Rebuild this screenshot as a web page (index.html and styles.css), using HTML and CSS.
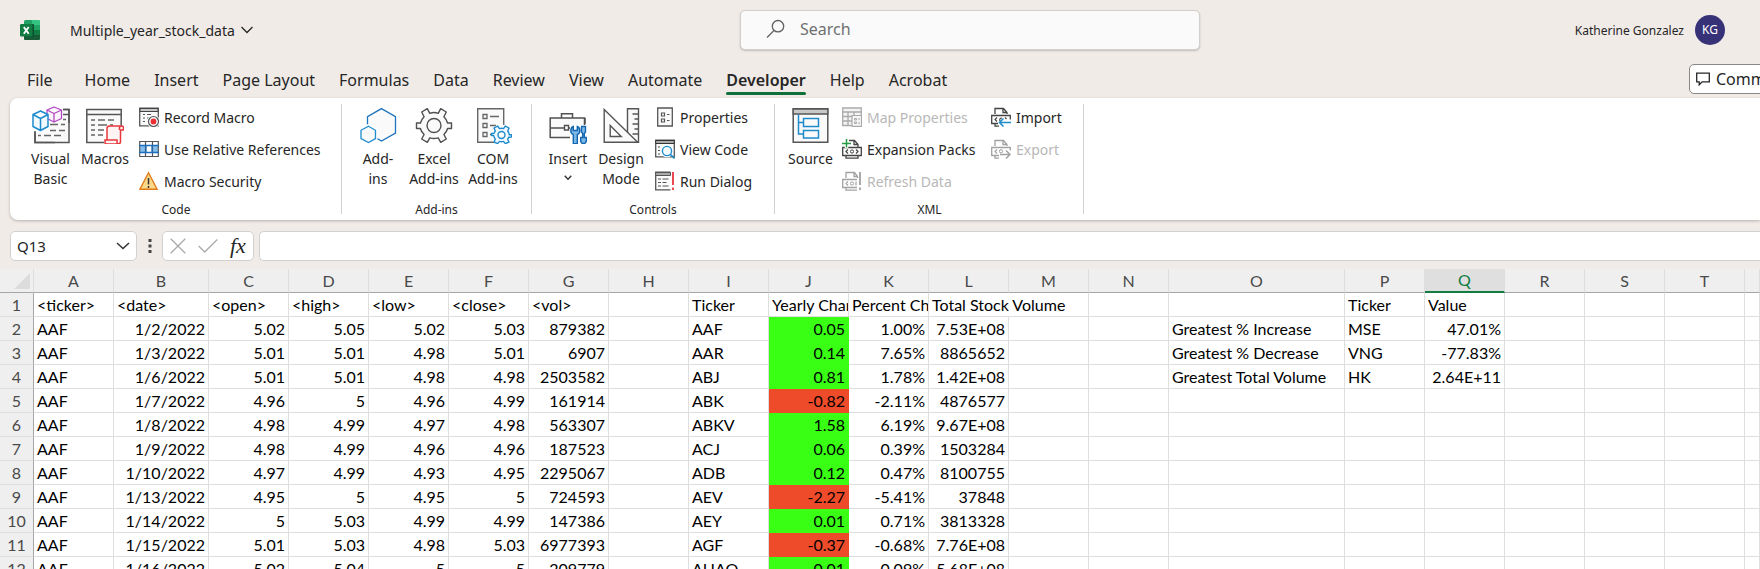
FILE: index.html
```html
<!DOCTYPE html>
<html lang="en">
<head>
<meta charset="utf-8">
<title>Multiple_year_stock_data</title>
<link rel="stylesheet" href="styles.css">
</head>
<body>
<header class="titlebar">
  <div class="doc">
    <svg class="logo" width="20" height="20" viewBox="0 0 20 20" aria-hidden="true">
      <rect x="4" width="16" height="20" rx="1.5" fill="#21a366"/>
      <path d="M12 0h6.500a1.500 1.500 0 0 1 1.500 1.500V5h-8z" fill="#33c481"/>
      <path d="M4 5h8v5H4z" fill="#107c41"/>
      <path d="M4 10h16v8.500a1.500 1.500 0 0 1-1.500 1.500h-13A1.500 1.500 0 0 1 4 18.500z" fill="#185c37"/>
      <path d="M12 10h8v5h-8z" fill="#107c41"/>
      <rect x="4" y="4" width="10" height="13" rx="1" fill="#0b5030"/>
      <rect y="4" width="12.500" height="12.500" rx="1.200" fill="#107c41"/>
      <path d="M3.800 7l4.900 6.800M8.700 7l-4.900 6.800" stroke="#fff" stroke-width="1.900"/>
    </svg>
    <button class="doc-name" type="button">Multiple_year_stock_data
      <svg width="12" height="8" viewBox="0 0 12 8" aria-hidden="true"><path d="M.5 1l5.500 5.500L11.500 1" fill="none" stroke="#262626" stroke-width="1.300"/></svg>
    </button>
  </div>
  <label class="search">
    <svg width="20" height="20" viewBox="0 0 20 20" aria-hidden="true"><g fill="none" stroke="#616161" stroke-width="1.300"><circle cx="12" cy="7.200" r="5.700"/><path d="M8 11.500L1 18.500"/></g></svg>
    <input type="text" placeholder="Search" aria-label="Search">
  </label>
  <div class="user"><span>Katherine Gonzalez</span><span class="avatar">KG</span></div>
</header>

<nav class="tabs">
  <button class="tab file" type="button">File</button>
  <button class="tab" type="button">Home</button>
  <button class="tab" type="button">Insert</button>
  <button class="tab" type="button">Page Layout</button>
  <button class="tab" type="button">Formulas</button>
  <button class="tab" type="button">Data</button>
  <button class="tab" type="button">Review</button>
  <button class="tab" type="button">View</button>
  <button class="tab" type="button">Automate</button>
  <button class="tab active" type="button">Developer</button>
  <button class="tab" type="button">Help</button>
  <button class="tab" type="button">Acrobat</button>
  <div class="comments-slot">
    <button class="comments" type="button">
      <svg width="14" height="14" viewBox="0 0 14 14" aria-hidden="true"><path d="M.7 1.200h12.600v8.600H6.200l-3 3v-3H.7z" fill="none" stroke="#262626" stroke-width="1.300"/></svg>
      Comments
    </button>
  </div>
</nav>

<section class="ribbon">
  <div class="group code">
    <div class="group-body">
      <button class="big vb" type="button">
        <svg width="38" height="38" viewBox="0 0 38 38" aria-hidden="true">
          <path d="M3 3.500h34v33H3z" fill="#fafafa" stroke="#555" stroke-width="1.500"/>
          <path d="M3 8.500h34" stroke="#555" stroke-width="1.300"/>
          <path d="M20 13.500h5m3 0h6M18 18.500h8m3 0h4M8 24.500h4m4 0h8m3 0h6M6 29.500h3m3 0h7m3 0h7" stroke="#666" stroke-width="1.500"/>
          <path d="M0 0h31v17H18v9H0z" fill="#fff"/>
          <path d="M18 3.500h-1M3 25v11.500h20M31 3.500h6V17" fill="none" stroke="#555" stroke-width="1.500"/>
          <path d="M22 1l7.500 3v8.500L22 16l-7-3.500V4zM15 4l7 3.500L29.500 4M22 7.500V16" fill="#fbf3fc" stroke="#b146c2" stroke-width="1.300" stroke-linejoin="round"/>
          <path d="M8.500 5L16 8.500v12L8.500 24.500 1 20.500v-12zM1 8.500l7.500 4 7.500-4M8.500 12.500v12" fill="#f3faff" stroke="#1e8bcd" stroke-width="1.500" stroke-linejoin="round"/>
        </svg>
        <span>Visual<br>Basic</span>
      </button>
      <button class="big macros" type="button">
        <svg width="38" height="38" viewBox="0 0 38 38" aria-hidden="true">
          <path d="M.8 3.500h34.400v33H.8z" fill="#fafafa" stroke="#555" stroke-width="1.500"/>
          <path d="M.8 8.500h34.400" stroke="#555" stroke-width="1.300"/>
          <path d="M5 14h4m3 0h7m3 0h6M5 19h4m3 0h9m3 0h3M5 24h4m3 0h6M5 29h4m3 0h5" stroke="#666" stroke-width="1.500"/>
          <path d="M18 37V20h13l6 3v15z" fill="#fff"/>
          <path d="M34.500 20H23.500a2.500 2.500 0 0 0-2.500 2.500V34h-2v2a2 2 0 0 0 2 2h11a2.500 2.500 0 0 0 2.500-2.500V24h3v-2a2 2 0 0 0-4 0v2M21 34h10v2a2 2 0 0 0 2 2" fill="#fff4f4" stroke="#e8383d" stroke-width="1.500"/>
        </svg>
        <span>Macros</span>
      </button>
      <div class="stack">
        <button class="small" type="button">
          <svg width="20" height="20" viewBox="0 0 20 20" aria-hidden="true"><path d="M.7 1.200h18.600v17.600H.7z" fill="#fafafa" stroke="#555" stroke-width="1.300"/><path d="M1 1.500h18v3H1z" fill="#c8c8c8" stroke="#444" stroke-width="1"/><path d="M4 7.500h2m2 0h4M4 11h2m2 0h2M4 14.500h2m2 0h1" stroke="#555" stroke-width="1.200"/><circle cx="14.500" cy="14.500" r="6.500" fill="#fff"/><circle cx="14.500" cy="14.500" r="5" fill="#fff" stroke="#555" stroke-width="1.200"/><circle cx="14.500" cy="14.500" r="2.900" fill="#eb2f33"/></svg>
          Record Macro
        </button>
        <button class="small" type="button">
          <svg width="20" height="20" viewBox="0 0 20 20" aria-hidden="true"><path d="M.7 2h18.600v16H.7z" fill="#fff"/><path d="M.7 6.500h6v7h-6zM13.300 6.500h6v7h-6z" fill="#83beec"/><path d="M.7 2.500h18.600v15H.7zM6.500 2.500v15M13.500 2.500v15" fill="none" stroke="#555" stroke-width="1.200"/><path d="M0 6.500h7v7H0M20 6.500h-7v7h7M7 6.500h6M7 13.500h6" fill="none" stroke="#1f6fc0" stroke-width="1.300"/></svg>
          Use Relative References
        </button>
        <button class="small" type="button">
          <svg width="20" height="20" viewBox="0 0 20 20" aria-hidden="true"><path d="M9.500 1.700l8.600 16.600H.9z" fill="#fbd98b" stroke="#e07b1a" stroke-width="1.400"/><path d="M9.500 7v6.500M9.500 15v2" stroke="#333" stroke-width="1.500"/></svg>
          Macro Security
        </button>
      </div>
    </div>
    <div class="group-name">Code</div>
  </div>
  <div class="divider"></div>

  <div class="group addins">
    <div class="group-body">
      <button class="big narrow" type="button">
        <svg width="38" height="38" viewBox="0 0 38 38" aria-hidden="true"><g fill="#fafafa" stroke="#1e74bf" stroke-width="1.300"><path d="M22.500 2.600l14 8v16.500l-14 8-14-8V10.600z"/><path d="M9.500 20l7 4.200v8.200l-7 4.200-7.500-4.200v-8.200z" stroke="#fff" stroke-width="4"/><path d="M9.500 20.300l7 4v8.200l-7 4-7.500-4v-8.200z" stroke="#1e8bcd"/></g></svg>
        <span>Add-<br>ins</span>
      </button>
      <button class="big excel-add" type="button">
        <svg width="38" height="38" viewBox="0 0 38 38" aria-hidden="true"><g fill="#fafafa" stroke="#505050" stroke-width="1.400"><path d="M12.300 2.700L14.800 7.300Q19 5.800 23.200 7.300L25.700 2.700L31.300 6L28.900 10.700Q31.800 13.700 32.600 17H36.500V22.500H32.600Q31.800 25.800 28.900 28.500L31.300 33L25.700 36.300L23.200 31.800Q19 33.200 14.800 31.800L12.300 36.300L6.700 33L9.100 28.500Q6.200 25.800 5.400 22.500H1.500V17H5.400Q6.200 13.700 9.100 10.700L6.700 6Z" stroke-linejoin="round"/><circle cx="19" cy="19.500" r="7"/></g></svg>
        <span>Excel<br>Add-ins</span>
      </button>
      <button class="big com" type="button">
        <svg width="38" height="38" viewBox="0 0 38 38" aria-hidden="true"><path d="M3.700 2.700h26v33.600h-26z" fill="#fafafa" stroke="#666" stroke-width="1.400"/><path d="M9 8.500h4v4H9zM9 17.500h4v4H9zM9 26.500h4v4H9zM16 10.500h9M16 19.500h6M16 28.500h2" fill="none" stroke="#666" stroke-width="1.300"/><circle cx="27.500" cy="29" r="10.500" fill="#fff"/><path d="M23.600 20L25.500 22.600Q27.500 22 29.500 22.600L31.400 20L35 22.100L33.700 25Q35 26.500 35.300 28.800L37.500 28.800L37.500 31L34.600 31.200Q34.200 32.600 33.700 33.200L35 36L31.400 37.600L29.500 35.400Q27.500 36 25.500 35.400L23.600 37.600L20 36L21.300 33.200Q20 31.500 19.700 29.500L17.500 29.500L17.500 27.500L20 27.300Q20.500 26 21.300 25L20 22.100Z" fill="#f3faff" stroke="#1e8bcd" stroke-width="1.400" stroke-linejoin="round"/><circle cx="27.500" cy="29" r="3.500" fill="#fff" stroke="#1e8bcd" stroke-width="1.400"/></svg>
        <span>COM<br>Add-ins</span>
      </button>
    </div>
    <div class="group-name">Add-ins</div>
  </div>
  <div class="divider"></div>

  <div class="group controls">
    <div class="group-body">
      <button class="big narrow" type="button">
        <svg width="38" height="38" viewBox="0 0 38 38" aria-hidden="true"><path d="M1.200 12h34.300v19.500H1.200z" fill="#fafafa" stroke="#505050" stroke-width="1.500"/><path d="M12.500 12V7.800h11V12M1.200 22h14M20 22h5" fill="none" stroke="#505050" stroke-width="1.500"/><path d="M15.500 19.500h4v4.500h-4z" fill="#fff" stroke="#505050" stroke-width="1.400"/><path d="M21 19h17v19H21z" fill="#fff"/><path d="M36 12v6" stroke="#505050" stroke-width="1.500"/><path d="M24.300 20.500v4h4v-4q2.500 1 2.500 4.200 0 2.800-2.500 3.900v9.200h-4v-9.200q-2.500-1.100-2.500-3.900 0-3.200 2.500-4.200zM32.500 20.500h4v5.500l-1.200 1.500v4h2v4l-1.500 2h-2.600l-1.500-2v-4h2v-4l-1.200-1.500z" fill="#7db9e8" stroke="#1365ae" stroke-width="1.400"/></svg>
        <span>Insert</span>
        <svg class="drop" width="8" height="6" viewBox="0 0 8 6" aria-hidden="true"><path d="M.7.8L4 4.300 7.300.8" fill="none" stroke="#333" stroke-width="1.400"/></svg>
      </button>
      <button class="big design" type="button">
        <svg width="38" height="38" viewBox="0 0 38 38" aria-hidden="true"><g fill="#fafafa" stroke="#555" stroke-width="1.400"><path d="M25.500 2.700h11v33.600h-11z"/><path d="M30.500 8h6M32.500 13h4M30.500 18h6M32.500 23h4M30.500 28h6"/><path d="M2.200 3.500l33.500 32.800H2.200z"/><path d="M8.200 19.500v11h11z" fill="#fff"/></g></svg>
        <span>Design<br>Mode</span>
      </button>
      <div class="stack">
        <button class="small" type="button">
          <svg width="20" height="20" viewBox="0 0 20 20" aria-hidden="true"><path d="M2.700 1h14.600v18H2.700z" fill="#fafafa" stroke="#555" stroke-width="1.300"/><path d="M6.500 6h3v3h-3zM6.500 12h3v3h-3zM12 7.500h2.500M12 13.500h2.500" fill="none" stroke="#555" stroke-width="1.200"/></svg>
          Properties
        </button>
        <button class="small" type="button">
          <svg width="20" height="20" viewBox="0 0 20 20" aria-hidden="true"><path d="M.7 1.200h18.600v16.600H.7z" fill="#fafafa" stroke="#555" stroke-width="1.300"/><path d="M.7 1.500h18.600v3H.7z" fill="#aaa" stroke="#333"/><path d="M3 8h2M3 11.500h2M3 15h2" stroke="#555" stroke-width="1.200"/><circle cx="12" cy="12" r="6.300" fill="#fff"/><path d="M15 15l4.500 4.500" stroke="#1e8bcd" stroke-width="1.700"/><circle cx="12" cy="12" r="4.600" fill="#f3faff" stroke="#1e8bcd" stroke-width="1.400"/></svg>
          View Code
        </button>
        <button class="small" type="button">
          <svg width="20" height="20" viewBox="0 0 20 20" aria-hidden="true"><path d="M15.500 1.200H.7v17.600h14.800" fill="#fafafa" stroke="#555" stroke-width="1.300"/><path d="M.7 1.500h14.800v3H.7z" fill="#aaa" stroke="#555"/><path d="M3 8h3m1.500 0h6M3 11.500h3m1.500 0h4M3 15h3m1.500 0h6" stroke="#555" stroke-width="1.200"/><path d="M18 1v13M18 16.500v2.500" stroke="#e8383d" stroke-width="1.800"/></svg>
          Run Dialog
        </button>
      </div>
    </div>
    <div class="group-name">Controls</div>
  </div>
  <div class="divider"></div>

  <div class="group xml">
    <div class="group-body">
      <button class="big narrow" type="button">
        <svg width="38" height="38" viewBox="0 0 38 38" aria-hidden="true"><path d="M2.200 2.700h34.600v33.600H2.200z" fill="#fafafa" stroke="#555" stroke-width="1.500"/><path d="M2.200 3h34.600v5H2.200z" fill="#c8c8c8" stroke="#555" stroke-width="1.300"/><path d="M7.500 8.500V28h5M7.500 16.500h5M12.500 12.500h15v8h-15zM12.500 24.500h15v7.500h-15z" fill="none" stroke="#1e8bcd" stroke-width="1.500"/></svg>
        <span>Source</span>
      </button>
      <div class="stack">
        <button class="small" type="button" disabled>
          <svg width="20" height="20" viewBox="0 0 20 20" aria-hidden="true"><path d="M.7 1h18.600v17.500H.7z" fill="#f4f4f4"/><path d="M.7 1h18.600v4H.7zM.7 5v13.500h9M6 5v13.500M12 5v4M19.300 5v4M.7 9.500H10M.7 14H10" fill="none" stroke="#aaa" stroke-width="1.300"/><path d="M10 8.500h9.500v10.800H10z" fill="#f7f7f7" stroke="#aaa" stroke-width="1.200"/><path d="M12.500 11.500h2v1.500h-2zM12.500 15h2v1.500h-2zM16 12h2M16 16h2" fill="none" stroke="#aaa"/></svg>
          Map Properties
        </button>
        <button class="small" type="button">
          <svg width="20" height="20" viewBox="0 0 20 20" aria-hidden="true"><path d="M7 1.500h5.500l3.500 4v3M12 1.500v4h4M.7 8.500h18.600v8H.7zM4 16.500v2.700h12v-2.700" fill="none" stroke="#444" stroke-width="1.300"/><path d="M6 10.500l-2 2 2 2M14 10.500l2 2-2 2" fill="none" stroke="#444" stroke-width="1.200"/><circle cx="10" cy="12.500" r="1.600" fill="none" stroke="#444"/><path d="M4.500 0v9M0 4.500h9" stroke="#fff" stroke-width="3.500"/><path d="M4.500 0v8.500M0 4.500h9" stroke="#299a45" stroke-width="1.500"/></svg>
          Expansion Packs
        </button>
        <button class="small" type="button" disabled>
          <svg width="20" height="20" viewBox="0 0 20 20" aria-hidden="true"><path d="M4 7V1.500h8.500l3 4V7M12 1.500v4h3.500M15 8.500H.7v8H15M4 16.500v2.700h11" fill="none" stroke="#a2a2a2" stroke-width="1.300"/><path d="M6 10.500l-2 2 2 2M14 10.500v4" fill="none" stroke="#a2a2a2" stroke-width="1.200"/><circle cx="10" cy="12.500" r="1.600" fill="none" stroke="#a2a2a2"/><path d="M18 1v13M18 16.500v2.500" stroke="#a2a2a2" stroke-width="1.800"/></svg>
          Refresh Data
        </button>
      </div>
      <div class="stack">
        <button class="small" type="button">
          <svg width="20" height="20" viewBox="0 0 20 20" aria-hidden="true"><path d="M4 7V1.500h8.500l3.500 4V7M12 1.500v4h4M7 16.500H.7v-8h18.600v4M4 16.500v2.700h4" fill="none" stroke="#444" stroke-width="1.300"/><path d="M6 10.500l-2 2 2 2M9 14q-1-3 2-3M14 10.500l1.500 1.500" fill="none" stroke="#444" stroke-width="1.200"/><path d="M20 15.500H9M12.500 11.500l-4 4 4 4" fill="none" stroke="#1e8bcd" stroke-width="1.500"/></svg>
          Import
        </button>
        <button class="small" type="button" disabled>
          <svg width="20" height="20" viewBox="0 0 20 20" aria-hidden="true"><path d="M4 7V1.500h8.500l3.500 4V7M12 1.500v4h4M8 16.500H.7v-8h18.600v3M4 16.500v2.700h4" fill="none" stroke="#a2a2a2" stroke-width="1.300"/><path d="M6 10.500l-2 2 2 2" fill="none" stroke="#a2a2a2" stroke-width="1.200"/><circle cx="10" cy="12.300" r="1.600" fill="none" stroke="#a2a2a2"/><path d="M9 15.500h10M15 11.500l4 4-4 4" fill="none" stroke="#a2a2a2" stroke-width="1.500"/></svg>
          Export
        </button>
      </div>
    </div>
    <div class="group-name">XML</div>
  </div>
  <div class="divider"></div>
</section>

<section class="formula-bar">
  <div class="name-box">
    <input type="text" value="Q13" aria-label="Name Box">
    <svg width="14" height="8" viewBox="0 0 14 8" aria-hidden="true"><path d="M1 1l6 5.500L13 1" fill="none" stroke="#333" stroke-width="1.500"/></svg>
  </div>
  <svg class="dots" width="4" height="14" viewBox="0 0 4 14" aria-hidden="true"><path d="M.5 0h3v3h-3zM.5 5.500h3v3h-3zM.5 11h3v3h-3z" fill="#444"/></svg>
  <div class="fx-box">
    <button type="button" aria-label="Cancel"><svg width="16" height="16" viewBox="0 0 16 16"><path d="M.7.700l14.600 14.600M15.300.7L.7 15.300" stroke="#aaa" stroke-width="1.300"/></svg></button>
    <button type="button" aria-label="Enter"><svg width="20" height="16" viewBox="0 0 20 16"><path d="M.7 8l6 6L19.300 1.500" fill="none" stroke="#aaa" stroke-width="1.300"/></svg></button>
    <button class="fx" type="button" aria-label="Insert Function">fx</button>
  </div>
  <input class="formula" type="text" aria-label="Formula Bar">
</section>

<table class="sheet">
  <colgroup>
    <col class="w-head"><col class="w80"><col class="w-date"><col class="w80"><col class="w80"><col class="w80"><col class="w80"><col class="w80"><col class="w80"><col class="w80"><col class="w80"><col class="w80"><col class="w80"><col class="w80"><col class="w80"><col class="w-label"><col class="w80"><col class="w80"><col class="w80"><col class="w80"><col class="w80"><col>
  </colgroup>
  <thead>
    <tr><th class="corner"><svg width="16" height="16" viewBox="0 0 16 16" aria-hidden="true"><path d="M16 0v16H0z" fill="#dcdcdc"/></svg></th><th>A</th><th>B</th><th>C</th><th>D</th><th>E</th><th>F</th><th>G</th><th>H</th><th>I</th><th>J</th><th>K</th><th>L</th><th>M</th><th>N</th><th>O</th><th>P</th><th class="selected">Q</th><th>R</th><th>S</th><th>T</th><th></th></tr>
  </thead>
  <tbody>
    <tr class="labels"><th>1</th><td>&lt;ticker&gt;</td><td>&lt;date&gt;</td><td>&lt;open&gt;</td><td>&lt;high&gt;</td><td>&lt;low&gt;</td><td>&lt;close&gt;</td><td>&lt;vol&gt;</td><td></td><td>Ticker</td><td>Yearly Change</td><td>Percent Change</td><td colspan="2">Total Stock Volume</td><td></td><td></td><td>Ticker</td><td>Value</td><td></td><td></td><td></td><td></td></tr>
    <tr><th>2</th><td class="t">AAF</td><td>1/2/2022</td><td>5.02</td><td>5.05</td><td>5.02</td><td>5.03</td><td>879382</td><td></td><td class="t">AAF</td><td class="up">0.05</td><td>1.00%</td><td>7.53E+08</td><td></td><td></td><td class="t">Greatest % Increase</td><td class="t">MSE</td><td>47.01%</td><td></td><td></td><td></td><td></td></tr>
    <tr><th>3</th><td class="t">AAF</td><td>1/3/2022</td><td>5.01</td><td>5.01</td><td>4.98</td><td>5.01</td><td>6907</td><td></td><td class="t">AAR</td><td class="up">0.14</td><td>7.65%</td><td>8865652</td><td></td><td></td><td class="t">Greatest % Decrease</td><td class="t">VNG</td><td>-77.83%</td><td></td><td></td><td></td><td></td></tr>
    <tr><th>4</th><td class="t">AAF</td><td>1/6/2022</td><td>5.01</td><td>5.01</td><td>4.98</td><td>4.98</td><td>2503582</td><td></td><td class="t">ABJ</td><td class="up">0.81</td><td>1.78%</td><td>1.42E+08</td><td></td><td></td><td class="t">Greatest Total Volume</td><td class="t">HK</td><td>2.64E+11</td><td></td><td></td><td></td><td></td></tr>
    <tr><th>5</th><td class="t">AAF</td><td>1/7/2022</td><td>4.96</td><td>5</td><td>4.96</td><td>4.99</td><td>161914</td><td></td><td class="t">ABK</td><td class="down">-0.82</td><td>-2.11%</td><td>4876577</td><td></td><td></td><td></td><td></td><td></td><td></td><td></td><td></td><td></td></tr>
    <tr><th>6</th><td class="t">AAF</td><td>1/8/2022</td><td>4.98</td><td>4.99</td><td>4.97</td><td>4.98</td><td>563307</td><td></td><td class="t">ABKV</td><td class="up">1.58</td><td>6.19%</td><td>9.67E+08</td><td></td><td></td><td></td><td></td><td></td><td></td><td></td><td></td><td></td></tr>
    <tr><th>7</th><td class="t">AAF</td><td>1/9/2022</td><td>4.98</td><td>4.99</td><td>4.96</td><td>4.96</td><td>187523</td><td></td><td class="t">ACJ</td><td class="up">0.06</td><td>0.39%</td><td>1503284</td><td></td><td></td><td></td><td></td><td></td><td></td><td></td><td></td><td></td></tr>
    <tr><th>8</th><td class="t">AAF</td><td>1/10/2022</td><td>4.97</td><td>4.99</td><td>4.93</td><td>4.95</td><td>2295067</td><td></td><td class="t">ADB</td><td class="up">0.12</td><td>0.47%</td><td>8100755</td><td></td><td></td><td></td><td></td><td></td><td></td><td></td><td></td><td></td></tr>
    <tr><th>9</th><td class="t">AAF</td><td>1/13/2022</td><td>4.95</td><td>5</td><td>4.95</td><td>5</td><td>724593</td><td></td><td class="t">AEV</td><td class="down">-2.27</td><td>-5.41%</td><td>37848</td><td></td><td></td><td></td><td></td><td></td><td></td><td></td><td></td><td></td></tr>
    <tr><th>10</th><td class="t">AAF</td><td>1/14/2022</td><td>5</td><td>5.03</td><td>4.99</td><td>4.99</td><td>147386</td><td></td><td class="t">AEY</td><td class="up">0.01</td><td>0.71%</td><td>3813328</td><td></td><td></td><td></td><td></td><td></td><td></td><td></td><td></td><td></td></tr>
    <tr><th>11</th><td class="t">AAF</td><td>1/15/2022</td><td>5.01</td><td>5.03</td><td>4.98</td><td>5.03</td><td>6977393</td><td></td><td class="t">AGF</td><td class="down">-0.37</td><td>-0.68%</td><td>7.76E+08</td><td></td><td></td><td></td><td></td><td></td><td></td><td></td><td></td><td></td></tr>
    <tr><th>12</th><td class="t">AAF</td><td>1/16/2022</td><td>5.02</td><td>5.04</td><td>5</td><td>5</td><td>209779</td><td></td><td class="t">AHAO</td><td class="up">0.01</td><td>0.09%</td><td>5.68E+08</td><td></td><td></td><td></td><td></td><td></td><td></td><td></td><td></td><td></td></tr>
  </tbody>
</table>
</body>
</html>
```
FILE: styles.css
```css
* {
  box-sizing: border-box;
}

html {
  height: 100%;
  overflow: hidden;
}

body {
  height: 100%;
  margin: 0;
  overflow: hidden;
  background: #f0ebe7;
  color: #262626;
  font-family: "Noto Sans", "Open Sans", sans-serif;
  font-size: 14px;
}

button,
input {
  margin: 0;
  padding: 0;
  border: 0;
  background: none;
  color: inherit;
  font: inherit;
}

svg {
  display: block;
  flex: none;
}

/* Title bar */
.titlebar {
  display: grid;
  grid-template-columns: 37fr 460px 28fr;
  align-items: center;
  height: 60px;
}

.doc {
  display: flex;
  align-items: center;
  gap: 30px;
  padding-left: 20px;
}

.doc-name {
  display: flex;
  align-items: center;
  gap: 6px;
}

.search {
  display: flex;
  align-items: center;
  gap: 14px;
  height: 40px;
  padding: 0 0 2px 25px;
  border: 1px solid #d2cecb;
  border-radius: 5px;
  background: #fafafa;
  box-shadow: 0 1px 2px #00000033;
}

.search input {
  flex: 1;
  min-width: 0;
  font-size: 16px;
}

.search input::placeholder {
  color: #707070;
  opacity: 1;
}

.user {
  display: flex;
  align-items: center;
  justify-content: flex-end;
  gap: 11px;
  padding-right: 35px;
  font-size: 12px;
}

.avatar {
  width: 30px;
  height: 30px;
  border-radius: 50%;
  background: #373277;
  color: #fff;
  line-height: 30px;
  text-align: center;
}

/* Ribbon tabs */
.tabs {
  display: flex;
  height: 38px;
  padding-left: 15px;
  font-size: 16px;
}

.tab {
  position: relative;
  height: 38px;
  padding: 2px 12px 0;
  white-space: nowrap;
}

.file {
  margin-right: 8px;
}

.active {
  font-weight: 600;
}

.active::after {
  content: "";
  position: absolute;
  right: 12px;
  bottom: 3px;
  left: 12px;
  height: 3px;
  border-radius: 2px;
  background: #0f703b;
}

.comments-slot {
  flex: 1;
  display: flex;
  justify-content: flex-end;
  align-items: center;
  min-width: 0;
}

.comments {
  display: flex;
  align-items: center;
  gap: 6px;
  height: 30px;
  margin-right: -53px;
  padding: 0 14px 0 6px;
  border: 1px solid #8a8886;
  border-radius: 5px;
  background: #fff;
}

/* Ribbon */
.ribbon {
  display: flex;
  height: 122px;
  margin-left: 10px;
  border-radius: 8px 0 0 8px;
  background: #fff;
  box-shadow: 0 1px 3px #00000040;
}

.group {
  display: flex;
  flex-direction: column;
}

.code {
  width: 331px;
  padding-left: 13px;
}

.addins {
  width: 189px;
  padding-left: 12px;
}

.controls {
  width: 242px;
  padding-left: 12px;
}

.xml {
  width: 308px;
  padding-left: 13px;
}

.divider {
  width: 1px;
  margin: 6px 0;
  background: #d1d1d1;
}

.group-body {
  display: flex;
  height: 102px;
}

.group-name {
  margin-left: -12px;
  font-size: 12px;
  line-height: 20px;
  text-align: center;
}

.big {
  display: flex;
  flex-direction: column;
  align-items: center;
  padding-top: 8px;
  line-height: 20px;
  white-space: nowrap;
}

.big span {
  margin-top: 5px;
}

.vb {
  width: 55px;
}

.macros {
  width: 54px;
}

.narrow {
  width: 48px;
}

.excel-add {
  width: 64px;
}

.com {
  width: 54px;
}

.design {
  width: 58px;
}

.drop {
  margin-top: 6px;
}

.stack {
  display: flex;
  flex-direction: column;
  gap: 4px;
  padding: 5px 0 0 7px;
}

.controls .stack {
  padding-left: 5px;
}

.xml .stack {
  min-width: 149px;
  padding-left: 9px;
}

.small {
  display: flex;
  align-items: center;
  gap: 5px;
  height: 28px;
  white-space: nowrap;
}

.small:disabled {
  color: #b8b8b8;
}

/* Formula bar */
.formula-bar {
  display: flex;
  align-items: center;
  height: 49px;
  padding: 2px 0 0 10px;
}

.name-box,
.fx-box,
.formula {
  height: 30px;
  border: 1px solid #d1d1d1;
  border-radius: 5px;
  background: #fff;
}

.name-box {
  display: flex;
  align-items: center;
  width: 127px;
  padding: 0 6px;
}

.name-box input {
  flex: 1;
  min-width: 0;
  font-size: 15px;
}

.dots {
  margin: 0 10px 0 11px;
}

.fx-box {
  display: flex;
  align-items: center;
  gap: 12px;
  width: 92px;
  padding-left: 7px;
}

.fx {
  font-family: "Liberation Serif", serif;
  font-size: 22px;
  font-style: italic;
  line-height: 24px;
}

.formula {
  flex: 1;
  margin-left: 5px;
  border-right: 0;
  border-radius: 5px 0 0 5px;
}

/* Worksheet */
.sheet {
  width: 100%;
  border-collapse: separate;
  border-spacing: 0;
  table-layout: fixed;
  background: #fff;
  color: #000;
  font-family: Lato, "Open Sans", sans-serif;
  font-size: 16px;
  line-height: 23px;
}

.w-head {
  width: 34px;
}

.w80 {
  width: 80px;
}

.w-date {
  width: 95px;
}

.w-label {
  width: 176px;
}

.sheet th,
.sheet td {
  height: 24px;
  padding: 0 3px;
  border-right: 1px solid #dedede;
  border-bottom: 1px solid #dedede;
  overflow: hidden;
  text-align: right;
  white-space: nowrap;
}

.sheet th {
  background: #efefef;
  color: #4a4a4a;
  font-weight: 400;
  text-align: center;
}

.sheet thead th {
  border-bottom-color: #a6a6a6;
}

.sheet tbody th {
  padding: 0;
  border-right-color: #a6a6a6;
}

.sheet .corner svg {
  margin-left: 11px;
}

.sheet .selected {
  border-bottom: 2px solid #107c41;
  background: #dfdfdf;
  color: #107c41;
  line-height: 22px;
}

.sheet .labels td,
.sheet .t {
  text-align: left;
}

.sheet .up {
  border-color: #38ff14;
  background: #38ff14;
}

.sheet .down {
  border-color: #ee4b2b;
  background: #ee4b2b;
}
```
